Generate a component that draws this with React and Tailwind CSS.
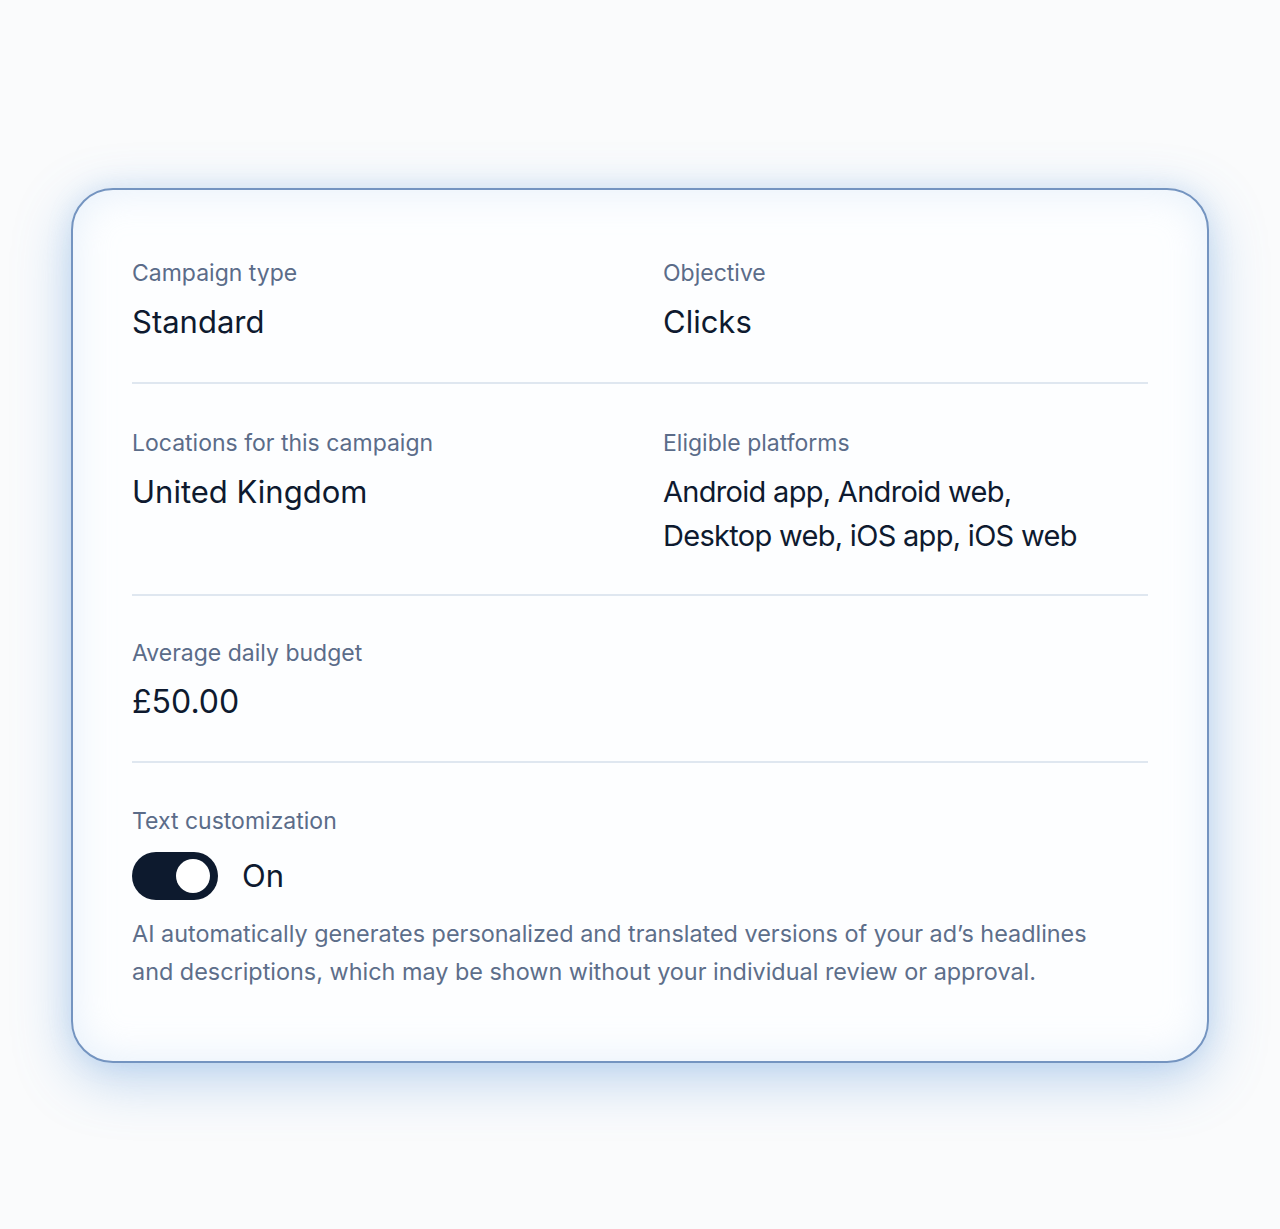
const Field = ({ label, children, valueClass = "text-[31px]" }) => (
  <div>
    <div className="text-[23px] leading-[28px] text-[#5b6c89]">{label}</div>
    <div className={`mt-[13px] leading-[44px] text-[#0e1a2f] ${valueClass}`}>{children}</div>
  </div>
);

export default function App() {
  return (
    <div
      className="min-h-screen w-full bg-[#fafbfc] pt-[188px] pb-[167px]"
      style={{ fontFamily: "Inter, 'Noto Sans', sans-serif" }}
    >
      <div className="mx-[71px] rounded-[42px] border-2 border-[#7494c0] bg-[#fdfeff] px-[59px] pt-[69px] pb-[70px] shadow-[0_16px_56px_rgba(86,148,216,0.38),0_0_24px_rgba(120,170,225,0.18),inset_0_0_40px_rgba(195,218,242,0.4)]">
        {/* summary rows */}
        <div className="grid grid-cols-2 gap-x-[46px] border-b-2 border-[#dfe7f0] pb-[38px]">
          <Field label="Campaign type">Standard</Field>
          <Field label="Objective">Clicks</Field>
        </div>

        <div className="grid grid-cols-2 gap-x-[46px] border-b-2 border-[#dfe7f0] pt-[45px] pb-[36px]">
          <Field label="Locations for this campaign">United Kingdom</Field>
          <Field label="Eligible platforms" valueClass="text-[29px] tracking-[-0.7px]">
            Android app, Android web,
            <br />
            Desktop web, iOS app, iOS web
          </Field>
        </div>

        <div className="border-b-2 border-[#dfe7f0] pt-[43px] pb-[37px]">
          <Field label="Average daily budget" valueClass="text-[32px]">£50.00</Field>
        </div>

        <div className="pt-[44px]">
          <div className="text-[23px] leading-[28px] text-[#5b6c89]">Text customization</div>
          <div className="mt-[17px] flex items-center gap-[24px]">
            <div className="flex h-[48px] w-[86px] items-center justify-end rounded-full bg-[#0d1a2e] pr-[8px]">
              <div className="h-[34px] w-[34px] rounded-full bg-white" />
            </div>
            <span className="text-[31px] leading-[40px] text-[#0e1a2f]">On</span>
          </div>
          <p className="mt-[15px] text-[23.4px] leading-[38px] text-[#5d6e8a]">
            AI automatically generates personalized and translated versions of your ad’s headlines
            <br />
            and descriptions, which may be shown without your individual review or approval.
          </p>
        </div>
      </div>
    </div>
  );
}
